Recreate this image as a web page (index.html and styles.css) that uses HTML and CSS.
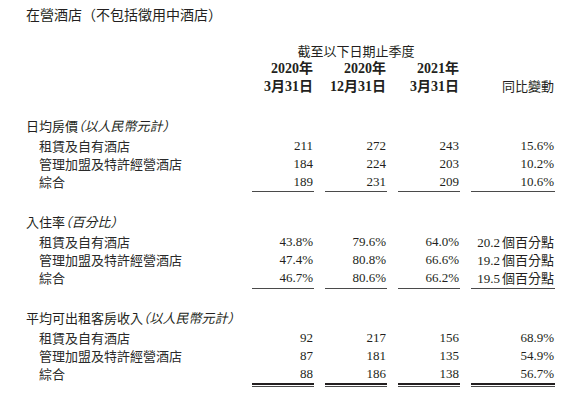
FILE: index.html
```html
<!DOCTYPE html>
<html lang="zh-Hant">
<head>
<meta charset="utf-8">
<title>在營酒店</title>
<link rel="stylesheet" href="styles.css">
</head>
<body>
<div class="page">
  <div class="title">在營酒店（不包括徵用中酒店）</div>

  <div class="row head first">
    <div></div>
    <div class="span3 sans">截至以下日期止季度</div>
    <div></div>
  </div>
  <div class="row head bold">
    <div></div>
    <div class="num">2020年</div>
    <div class="num">2020年</div>
    <div class="num">2021年</div>
    <div></div>
  </div>
  <div class="row head bold">
    <div></div>
    <div class="num">3月31日</div>
    <div class="num">12月31日</div>
    <div class="num">3月31日</div>
    <div class="num sans plain">同比變動</div>
  </div>

  <section class="sec">
    <div class="sec-title">日均房價<span class="unit">（以人民幣元計）</span></div>
    <div class="row"><div class="label">租賃及自有酒店</div><div class="num">211</div><div class="num">272</div><div class="num">243</div><div class="num">15.6%</div></div>
    <div class="row"><div class="label">管理加盟及特許經營酒店</div><div class="num">184</div><div class="num">224</div><div class="num">203</div><div class="num">10.2%</div></div>
    <div class="row total"><div class="label">綜合</div><div class="num">189</div><div class="num">231</div><div class="num">209</div><div class="num">10.6%</div></div>
  </section>

  <section class="sec">
    <div class="sec-title">入住率<span class="unit">（百分比）</span></div>
    <div class="row"><div class="label">租賃及自有酒店</div><div class="num">43.8%</div><div class="num">79.6%</div><div class="num">64.0%</div><div class="num">20.2<span class="cjk">個百分點</span></div></div>
    <div class="row"><div class="label">管理加盟及特許經營酒店</div><div class="num">47.4%</div><div class="num">80.8%</div><div class="num">66.6%</div><div class="num">19.2<span class="cjk">個百分點</span></div></div>
    <div class="row total"><div class="label">綜合</div><div class="num">46.7%</div><div class="num">80.6%</div><div class="num">66.2%</div><div class="num">19.5<span class="cjk">個百分點</span></div></div>
  </section>

  <section class="sec">
    <div class="sec-title">平均可出租客房收入<span class="unit">（以人民幣元計）</span></div>
    <div class="row"><div class="label">租賃及自有酒店</div><div class="num">92</div><div class="num">217</div><div class="num">156</div><div class="num">68.9%</div></div>
    <div class="row"><div class="label">管理加盟及特許經營酒店</div><div class="num">87</div><div class="num">181</div><div class="num">135</div><div class="num">54.9%</div></div>
    <div class="row"><div class="label">綜合</div><div class="num">88</div><div class="num">186</div><div class="num">138</div><div class="num">56.7%</div></div>
    <div class="row dbl"><div></div><div class="rule"></div><div class="rule"></div><div class="rule"></div><div class="rule"></div></div>
  </section>
</div>
</body>
</html>
```
FILE: styles.css
```css
html, body {
  margin: 0;
  padding: 0;
  background: #ffffff;
}

.page {
  padding: 4px 0 0 26px;
  color: #231f20;
  font-family: "Noto Sans CJK TC", "Noto Sans CJK SC", sans-serif;
  font-size: 13px;
}

.title {
  font-size: 14px;
  line-height: 20px;
  height: 20px;
}

.row {
  display: grid;
  grid-template-columns: 215px 62px 62px 62px 84px;
  column-gap: 11px;
  line-height: 18px;
  height: 18px;
}

.head.first {
  margin-top: 18px;
}

.span3 {
  grid-column: 2 / span 3;
  text-align: center;
}

.sans {
  font-family: "Noto Sans CJK TC", "Noto Sans CJK SC", sans-serif;
}

.bold .num {
  font-weight: bold;
  font-size: 14px;
}

.bold .plain {
  font-weight: normal;
  font-size: 13px;
}

.num {
  text-align: right;
  padding-right: 1px;
  font-family: "Liberation Serif", "Noto Sans CJK TC", "Noto Sans CJK SC", serif;
  white-space: nowrap;
}

.cjk {
  font-family: "Noto Sans CJK TC", "Noto Sans CJK SC", sans-serif;
  margin-left: 2px;
}

.label {
  padding-left: 13px;
  color: #2a2a2a;
  white-space: nowrap;
}

.sec {
  margin-top: 22px;
}

.head + .sec {
  margin-top: 21px;
}

.sec-title {
  line-height: 18px;
  height: 18px;
  margin-bottom: 2px;
  font-feature-settings: "halt";
  white-space: nowrap;
}

.unit {
  font-style: italic;
}

.total .num {
  border-bottom: 1px solid #4a4a4a;
}

.row.dbl {
  height: 5px;
  line-height: 0;
}

.rule {
  height: 1px;
  border-top: 2px solid #231f20;
  border-bottom: 1px solid #4a4a4a;
}
```
